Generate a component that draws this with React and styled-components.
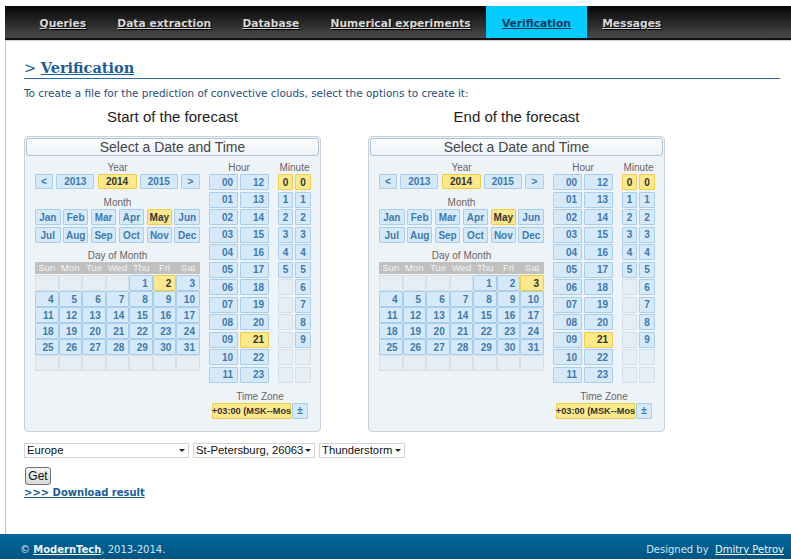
import React from "react";
import styled, { createGlobalStyle, css } from "styled-components";

const GlobalStyle = createGlobalStyle`
  html, body {
    margin: 0;
    padding: 0;
    background: #fff;
  }
  body {
    font-family: "DejaVu Sans", Verdana, sans-serif;
    overflow: hidden;
  }
`;

const Page = styled.div`
  min-height: 100vh;
  display: flex;
  flex-direction: column;
`;

const Header = styled.header`
  padding: 6px 0 0 5px;
`;

const NavBar = styled.nav`
  height: 32px;
  display: flex;
  padding-left: 19px;
  background: linear-gradient(#050505, #4a4a4a);
  border-bottom: 2px solid #111;
  box-shadow: 0 1px 0 #cfcfcf;
`;

const NavLink = styled.a`
  display: flex;
  align-items: center;
  padding: 3px 15.6px 0;
  font: bold 10.7px "DejaVu Sans", Verdana, sans-serif;
  text-decoration: underline;
  color: ${(p) => (p.$active ? "#16395b" : "#d8d8d8")};
  background: ${(p) => (p.$active ? "#00ccff" : "transparent")};
  text-shadow: ${(p) => (p.$active ? "none" : "1px 1px 1px #000")};
`;

const Main = styled.main`
  flex: 1;
  margin: 1px 0 0 5px;
  border-left: 1px solid #c4c4c4;
  padding: 18px 11px 0 18px;
`;

const Title = styled.h1`
  margin: 0;
  padding-bottom: 1px;
  border-bottom: 1px solid #2d6ca3;
  font: normal 14.5px/17px "DejaVu Serif", Georgia, serif;
  color: #1b5d97;

  a {
    font-weight: bold;
    color: #1b5d97;
    text-decoration: underline;
  }
`;

const Intro = styled.p`
  margin: 8px 0 0;
  font: 10.45px/12px "DejaVu Sans", Verdana, sans-serif;
  color: #1f4d7a;
`;

const Forecasts = styled.div`
  display: grid;
  grid-template-columns: 297px 297px;
  column-gap: 47px;
  margin-top: 9px;
`;

const Caption = styled.div`
  font: 15px/17px "Liberation Sans", Arial, sans-serif;
  color: #222;
  text-align: center;
  margin-bottom: 11px;
`;

const Picker = styled.div`
  box-sizing: border-box;
  width: 297px;
  height: 296px;
  padding: 1px;
  border: 1px solid #c6d3de;
  border-radius: 4px;
  background: #eef3f8;
`;

const PickerTitle = styled.div`
  box-sizing: border-box;
  height: 18px;
  border: 1px solid #b1c4d4;
  border-radius: 3px;
  background: linear-gradient(#fcfdff, #eef3f8);
  font: 14px/16px "Liberation Sans", Arial, sans-serif;
  color: #454545;
  text-align: center;
`;

const PickerBody = styled.div`
  display: flex;
  gap: 9px;
  padding: 5px 0 0 9px;
`;

const Column = styled.div`
  width: ${(p) => p.$w}px;
  display: flex;
  flex-direction: column;
`;

const Label = styled.div`
  height: 13px;
  margin-top: ${(p) => p.$gap || 0}px;
  font: 10px/13px "Liberation Sans", Arial, sans-serif;
  color: #666;
  text-align: center;
`;

const cellStates = {
  on: css`
    background: #fde98c;
    border-color: #f0cd48;
    color: #333;
  `,
  off: css`
    background: #d6e9f8;
    border-color: #a9cdec;
    color: #3d79ad;
  `,
  empty: css`
    background: #e6edf3;
    border-color: #d3dfe9;
    color: transparent;
  `,
};

const Cell = styled.div`
  box-sizing: border-box;
  display: flex;
  align-items: center;
  justify-content: ${(p) => p.$align || "center"};
  padding: ${(p) => (p.$align === "flex-end" ? "0 4px 0 0" : "0")};
  width: ${(p) => (p.$w ? `${p.$w}px` : "auto")};
  height: ${(p) => p.$h || 16}px;
  border: 1px solid;
  border-radius: 1px;
  font: bold ${(p) => p.$size || 10}px "Liberation Sans", Arial, sans-serif;
  white-space: nowrap;
  ${(p) => cellStates[p.$state || "off"]}
`;

const YearRow = styled.div`
  display: grid;
  grid-template-columns: 18px 38px 39px 38px 19px;
  justify-content: space-between;
`;

const MonthGrid = styled.div`
  display: grid;
  grid-template-columns: repeat(6, 1fr);
  gap: 2px 2.4px;
`;

const WeekHead = styled.div`
  display: grid;
  grid-template-columns: repeat(7, 1fr);
  height: 12px;
  background: #c0c0c0;
  font: 9.5px/12px "Liberation Sans", Arial, sans-serif;
  color: #f3f3f3;
  text-align: center;
`;

const DayGrid = styled.div`
  display: grid;
  grid-template-columns: repeat(7, 1fr);
  margin-top: 1px;
`;

const TimeCols = styled.div`
  display: flex;
  gap: 9px;
`;

const TimeGrid = styled.div`
  display: grid;
  grid-template-columns: ${(p) => p.$cols};
  column-gap: 2px;
  row-gap: 1.5px;
`;

const ZoneRow = styled.div`
  display: flex;
  justify-content: center;
  gap: 1px;
`;

const Controls = styled.div`
  display: flex;
  gap: 4px;
  margin-top: 11px;
`;

const SelectWrap = styled.div`
  position: relative;
  width: ${(p) => p.$w}px;
  height: 15px;

  &::after {
    content: "";
    position: absolute;
    right: 4px;
    top: 6px;
    border-top: 3px solid #222;
    border-left: 3px solid transparent;
    border-right: 3px solid transparent;
    pointer-events: none;
  }
`;

const Select = styled.select`
  appearance: none;
  display: block;
  box-sizing: border-box;
  width: 100%;
  height: 15px;
  margin: 0;
  padding: 0 10px 0 2px;
  border: 1px solid #d4d4d4;
  border-radius: 0;
  background: #fff;
  font: 11.3px/13px "Liberation Sans", Arial, sans-serif;
  color: #111;
`;

const GetButton = styled.button`
  display: block;
  box-sizing: border-box;
  width: 26px;
  height: 18px;
  margin: 9px 0 0 1px;
  padding: 0;
  border: 1px solid #707070;
  border-radius: 3px;
  background: linear-gradient(#f4f4f4, #dadada);
  font: 12px "Liberation Sans", Arial, sans-serif;
  color: #111;
`;

const Download = styled.a`
  display: block;
  width: fit-content;
  margin-top: 2px;
  font: bold 10px/12px "DejaVu Sans", Verdana, sans-serif;
  color: #1b5d97;
  text-decoration: underline;
`;

const Footer = styled.footer`
  box-sizing: border-box;
  height: 25px;
  padding: 5px 7px 0 20px;
  display: flex;
  align-items: center;
  justify-content: space-between;
  background: linear-gradient(#00679b, #005583);
  font: 10px "DejaVu Sans", Verdana, sans-serif;
  color: #d6e4ee;

  a {
    color: #eef4f8;
    text-decoration: underline;
  }
`;

const Strong = styled.a`
  font-weight: bold;
`;

const NAV = [
  "Queries",
  "Data extraction",
  "Database",
  "Numerical experiments",
  "Verification",
  "Messages",
];

const MONTHS = ["Jan", "Feb", "Mar", "Apr", "May", "Jun", "Jul", "Aug", "Sep", "Oct", "Nov", "Dec"];
const WEEKDAYS = ["Sun", "Mon", "Tue", "Wed", "Thu", "Fri", "Sat"];

// May 2014 starts on a Thursday, six weeks shown
const DAYS = (() => {
  const cells = [null, null, null, null];
  for (let d = 1; d <= 31; d++) cells.push(d);
  while (cells.length < 42) cells.push(null);
  return cells;
})();

const pad = (n) => String(n).padStart(2, "0");

const HOURS = [];
for (let r = 0; r < 12; r++) HOURS.push(pad(r), pad(r + 12));

const MINUTES = [];
for (let r = 0; r < 12; r++) MINUTES.push(r <= 5 ? r : null, r <= 9 ? r : null);

const DateTimePicker = ({ day, hour }) => (
  <Picker>
    <PickerTitle>Select a Date and Time</PickerTitle>
    <PickerBody>
      <Column $w={165}>
        <Label>Year</Label>
        <YearRow>
          <Cell $h={15}>&lt;</Cell>
          <Cell $h={15}>2013</Cell>
          <Cell $h={15} $state="on">2014</Cell>
          <Cell $h={15}>2015</Cell>
          <Cell $h={15}>&gt;</Cell>
        </YearRow>
        <Label $gap={7}>Month</Label>
        <MonthGrid>
          {MONTHS.map((m) => (
            <Cell key={m} $state={m === "May" ? "on" : "off"}>
              {m}
            </Cell>
          ))}
        </MonthGrid>
        <Label $gap={6}>Day of Month</Label>
        <WeekHead>
          {WEEKDAYS.map((w) => (
            <span key={w}>{w}</span>
          ))}
        </WeekHead>
        <DayGrid>
          {DAYS.map((d, i) => (
            <Cell
              key={i}
              $align="flex-end"
              $state={d === null ? "empty" : d === day ? "on" : "off"}
            >
              {d}
            </Cell>
          ))}
        </DayGrid>
      </Column>
      <Column $w={102}>
        <TimeCols>
          <Column $w={60}>
            <Label>Hour</Label>
            <TimeGrid $cols="29px 29px">
              {HOURS.map((h) => (
                <Cell key={h} $align="flex-end" $state={h === hour ? "on" : "off"}>
                  {h}
                </Cell>
              ))}
            </TimeGrid>
          </Column>
          <Column $w={33}>
            <Label>Minute</Label>
            <TimeGrid $cols="15px 16px">
              {MINUTES.map((m, i) => (
                <Cell
                  key={i}
                  $state={m === null ? "empty" : i < 2 ? "on" : "off"}
                >
                  {m}
                </Cell>
              ))}
            </TimeGrid>
          </Column>
        </TimeCols>
        <Label $gap={7}>Time Zone</Label>
        <ZoneRow>
          <Cell $state="on" $w={79} $size={9.2}>
            +03:00 (MSK--Mos
          </Cell>
          <Cell $w={16}>±</Cell>
        </ZoneRow>
      </Column>
    </PickerBody>
  </Picker>
);

export default function App() {
  return (
    <Page>
      <GlobalStyle />
      <Header>
        <NavBar>
          {NAV.map((item) => (
            <NavLink key={item} href="#" $active={item === "Verification"}>
              {item}
            </NavLink>
          ))}
        </NavBar>
      </Header>
      <Main>
        <Title>
          &gt; <a href="#">Verification</a>
        </Title>
        <Intro>
          To create a file for the prediction of convective clouds, select the options to create it:
        </Intro>
        <Forecasts>
          <div>
            <Caption>Start of the forecast</Caption>
            <DateTimePicker day={2} hour="21" />
          </div>
          <div>
            <Caption>End of the forecast</Caption>
            <DateTimePicker day={3} hour="21" />
          </div>
        </Forecasts>
        <Controls>
          <SelectWrap $w={165}>
            <Select defaultValue="Europe">
              <option>Europe</option>
            </Select>
          </SelectWrap>
          <SelectWrap $w={122}>
            <Select defaultValue="spb">
              <option value="spb">St-Petersburg, 26063</option>
            </Select>
          </SelectWrap>
          <SelectWrap $w={86}>
            <Select defaultValue="ts">
              <option value="ts">Thunderstorm</option>
            </Select>
          </SelectWrap>
        </Controls>
        <GetButton>Get</GetButton>
        <Download href="#">&gt;&gt;&gt; Download result</Download>
      </Main>
      <Footer>
        <span>
          © <Strong href="#">ModernTech</Strong>, 2013-2014.
        </span>
        <span>
          Designed by&nbsp; <a href="#">Dmitry Petrov</a>
        </span>
      </Footer>
    </Page>
  );
}
